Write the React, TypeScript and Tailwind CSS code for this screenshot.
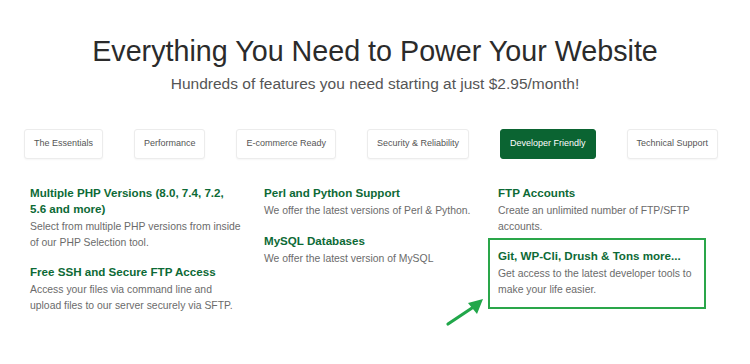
import { Fragment } from "react";

const tabs = [
  "The Essentials",
  "Performance",
  "E-commerce Ready",
  "Security & Reliability",
  "Developer Friendly",
  "Technical Support",
];

const activeTab = "Developer Friendly";

interface Feature {
  title: string;
  text: string;
  highlight?: boolean;
}

const columns: Feature[][] = [
  [
    {
      title: "Multiple PHP Versions (8.0, 7.4, 7.2, 5.6 and more)",
      text: "Select from multiple PHP versions from inside of our PHP Selection tool.",
    },
    {
      title: "Free SSH and Secure FTP Access",
      text: "Access your files via command line and upload files to our server securely via SFTP.",
    },
  ],
  [
    {
      title: "Perl and Python Support",
      text: "We offer the latest versions of Perl & Python.",
    },
    {
      title: "MySQL Databases",
      text: "We offer the latest version of MySQL",
    },
  ],
  [
    {
      title: "FTP Accounts",
      text: "Create an unlimited number of FTP/SFTP accounts.",
    },
    {
      title: "Git, WP-Cli, Drush & Tons more...",
      text: "Get access to the latest developer tools to make your life easier.",
      highlight: true,
    },
  ],
];

const FeatureItem = ({ feature }: { feature: Feature }) => (
  <Fragment>
    <h3 className="text-[11.6px] font-bold leading-[16px] text-[#0d6a36]">{feature.title}</h3>
    <p className="mt-[2px] text-[10.4px] leading-[15.5px] text-[#6b6b6b]">{feature.text}</p>
  </Fragment>
);

export default function App() {
  return (
    <div
      className="relative h-[364px] w-[750px] overflow-hidden bg-white"
      style={{ fontFamily: '"Liberation Sans", Arial, sans-serif' }}
    >
      <div className="pt-[35px] text-center">
        <h1 className="text-[28.7px] font-normal leading-[32px] text-[#2b2b2b]">
          Everything You Need to Power Your Website
        </h1>
        <p className="mt-[7px] text-[15.5px] leading-[20px] text-[#555555]">
          Hundreds of features you need starting at just $2.95/month!
        </p>
      </div>

      <div className="mt-[35px] flex justify-center gap-[31px] pr-[8px]">
        {tabs.map((tab) =>
          tab === activeTab ? (
            <button
              key={tab}
              type="button"
              className="h-[30px] rounded-[3px] border border-[#0b6432] bg-[#0b6432] px-[9px] text-[9px] text-white"
            >
              {tab}
            </button>
          ) : (
            <button
              key={tab}
              type="button"
              className="h-[30px] rounded-[3px] border border-[#ececec] bg-white px-[9px] text-[9px] text-[#555555] shadow-[0_1px_2px_rgba(0,0,0,0.04)]"
            >
              {tab}
            </button>
          ),
        )}
      </div>

      <div className="mt-[26px] grid grid-cols-[212px_212px_212px] gap-x-[22px] pl-[30px]">
        {columns.map((column, index) => (
          <div key={index} className="flex flex-col">
            {column.map((feature, i) =>
              feature.highlight ? (
                <div
                  key={feature.title}
                  className="-ml-[10px] mt-[4px] w-[218px] border-2 border-[#2aa64a] px-[8px] pb-[10px] pt-[8px]"
                >
                  <FeatureItem feature={feature} />
                </div>
              ) : (
                <div key={feature.title} className={i > 0 ? "mt-[14px]" : ""}>
                  <FeatureItem feature={feature} />
                </div>
              ),
            )}
          </div>
        ))}
      </div>

      {/* pointer arrow */}
      <svg
        className="absolute left-[444px] top-[294px]"
        width="44"
        height="34"
        viewBox="0 0 44 34"
        fill="none"
      >
        <line x1="4" y1="30" x2="31" y2="12" stroke="#21a74a" strokeWidth="3.2" strokeLinecap="round" />
        <polygon points="39,5 24,9 33,20" fill="#21a74a" />
      </svg>
    </div>
  );
}
